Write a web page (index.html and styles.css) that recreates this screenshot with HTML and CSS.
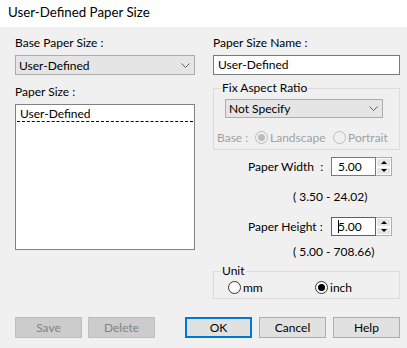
FILE: index.html
```html
<!DOCTYPE html>
<html>
<head>
<meta charset="utf-8">
<link rel="stylesheet" href="styles.css">
</head>
<body>
<div class="titlebar">User-Defined Paper Size</div>
<div class="dialog">
  <div class="cols">
    <div class="col col-left">
      <div class="label">Base Paper Size :</div>
      <div class="select select-base">
        <span>User-Defined</span>
        <svg class="chev" width="9" height="5" viewBox="0 0 9 5"><path d="M0.5 0.5 L4.5 4.5 L8.5 0.5" fill="none" stroke="#606060" stroke-width="1"/></svg>
      </div>
      <div class="label label-gap">Paper Size :</div>
      <div class="listbox">
        <div class="list-item">User-Defined</div>
      </div>
    </div>
    <div class="col col-right">
      <div class="label">Paper Size Name :</div>
      <div class="textbox">User-Defined</div>
      <fieldset class="group group-aspect">
        <legend>Fix Aspect Ratio</legend>
        <div class="select select-aspect">
          <span>Not Specify</span>
          <svg class="chev" width="9" height="5" viewBox="0 0 9 5"><path d="M0.5 0.5 L4.5 4.5 L8.5 0.5" fill="none" stroke="#606060" stroke-width="1"/></svg>
        </div>
        <div class="base-row">
          <span class="base-label">Base :</span>
          <span class="opt opt-land"><span class="radio radio-disabled checked"></span>Landscape</span>
          <span class="opt"><span class="radio radio-disabled"></span>Portrait</span>
        </div>
      </fieldset>
      <div class="num-row num-width">
        <span class="num-label">Paper Width&nbsp;&nbsp;:</span>
        <div class="numbox">5.00</div>
        <div class="spin"><span class="spin-btn"><span class="tri-up"></span></span><span class="spin-btn"><span class="tri-down"></span></span></div>
      </div>
      <div class="range range-width">( 3.50 - 24.02)</div>
      <div class="num-row num-height">
        <span class="num-label">Paper Height :</span>
        <div class="numbox focused"><span class="caret"></span>5.00</div>
        <div class="spin"><span class="spin-btn"><span class="tri-up"></span></span><span class="spin-btn"><span class="tri-down"></span></span></div>
      </div>
      <div class="range range-height">( 5.00 - 708.66)</div>
      <fieldset class="group group-unit">
        <legend>Unit</legend>
        <div class="unit-row">
          <span class="opt opt-mm"><span class="radio"></span>mm</span>
          <span class="opt"><span class="radio checked"></span>inch</span>
        </div>
      </fieldset>
    </div>
  </div>
  <div class="buttons">
    <div class="btn-group">
      <button class="btn disabled">Save</button>
      <button class="btn disabled">Delete</button>
    </div>
    <div class="btn-group btn-group-right">
      <button class="btn default">OK</button>
      <button class="btn">Cancel</button>
      <button class="btn">Help</button>
    </div>
  </div>
</div>
</body>
</html>
```
FILE: styles.css
```css
* { box-sizing: border-box; }
html, body {
  margin: 0;
  padding: 0;
  background: #f0f0f0;
  font-family: "Lato", "Noto Sans", sans-serif;
  font-size: 12px;
  color: #000;
}
.titlebar {
  height: 27px;
  background: #fff;
  padding-left: 8px;
  line-height: 25px;
  font-size: 13.3px;
}
.dialog {
  padding: 8px 7px 0 15px;
}
.cols {
  display: flex;
  gap: 18px;
}
.col-left { width: 180px; }
.col-right { flex: 1; }
.label {
  line-height: 16px;
  height: 16px;
}
.label-gap { margin-top: 9px; }
.select {
  margin-top: 4px;
  height: 20px;
  background: #e5e5e5;
  border: 1px solid #acacac;
  display: flex;
  align-items: center;
  justify-content: space-between;
  padding: 0 4px 0 3px;
}
.chev { display: block; }
.listbox {
  margin-top: 4px;
  height: 146px;
  background: #fff;
  border: 1px solid #828282;
  padding: 0 1px;
}
.list-item {
  height: 17px;
  line-height: 17px;
  padding-left: 3px;
  border-bottom: 1px dashed #000;
}
.textbox {
  margin-top: 4px;
  height: 20px;
  background: #fff;
  border: 1px solid #7a7a7a;
  line-height: 18px;
  padding-left: 4px;
}
.group {
  margin: 0;
  padding: 0 0 4px;
  border: 1px solid #dcdcdc;
  min-width: 0;
}
.group legend {
  margin-left: 7px;
  padding: 0 1px;
  line-height: 16px;
}
.group-aspect { margin-top: 5px; }
.select-aspect {
  margin: 3px 16px 0 11px;
  height: 19px;
}
.base-row {
  margin-top: 11px;
  display: flex;
  align-items: center;
  height: 16px;
  padding-left: 3px;
  color: #a0a0a0;
}
.base-label { width: 38px; }
.opt {
  display: inline-flex;
  align-items: center;
  gap: 2px;
}
.opt-land { width: 78px; }
.radio {
  width: 13px;
  height: 13px;
  border-radius: 50%;
  border: 1px solid #333;
  background: #fff;
  display: inline-flex;
  align-items: center;
  justify-content: center;
}
.radio.checked::after {
  content: "";
  width: 7px;
  height: 7px;
  border-radius: 50%;
  background: #000;
}
.radio-disabled {
  border-color: #bcbcbc;
  background: #f0f0f0;
}
.radio-disabled.checked::after { background: #bcbcbc; }
.num-row {
  display: flex;
  align-items: center;
  height: 19px;
}
.num-width { margin-top: 7px; }
.num-height { margin-top: 12px; }
.num-label {
  padding-left: 35px;
  width: 118px;
}
.numbox {
  width: 45px;
  height: 19px;
  background: #fff;
  border: 1px solid #7a7a7a;
  line-height: 17px;
  padding-left: 6px;
  display: flex;
  align-items: center;
}
.numbox.focused { border-color: #0078d7; }
.caret {
  width: 1px;
  height: 13px;
  background: #000;
  margin-right: -1px;
}
.spin {
  width: 16px;
  height: 19px;
  border: 1px solid #adadad;
  border-left: none;
  display: flex;
  flex-direction: column;
  background: #fff;
}
.spin-btn {
  flex: 1;
  background: #e5e5e5;
  border: 1px solid #fff;
  display: flex;
  align-items: center;
  justify-content: center;
}
.tri-up, .tri-down {
  width: 0;
  height: 0;
  border-left: 3px solid transparent;
  border-right: 3px solid transparent;
}
.tri-up { border-bottom: 3px solid #000; }
.tri-down { border-top: 3px solid #000; }
.range {
  line-height: 16px;
  padding-left: 80px;
}
.range-width { margin-top: 13px; }
.range-height { margin-top: 8px; }
.group-unit { margin-top: 3px; padding-bottom: 3px; }
.unit-row {
  display: flex;
  align-items: center;
  height: 16px;
  padding-left: 14px;
}
.opt-mm { width: 87px; }
.buttons {
  margin-top: 18px;
  display: flex;
  justify-content: space-between;
}
.btn-group { display: flex; gap: 6px; }
.btn-group-right { gap: 7px; }
.btn {
  width: 67px;
  height: 21px;
  margin: 0;
  padding: 0;
  background: #e1e1e1;
  border: 1px solid #adadad;
  font-family: inherit;
  font-size: 12px;
  color: #000;
}
.btn.disabled {
  background: #cccccc;
  border-color: #bfbfbf;
  color: #838383;
}
.btn.default {
  border: 2px solid #0078d7;
}
```
